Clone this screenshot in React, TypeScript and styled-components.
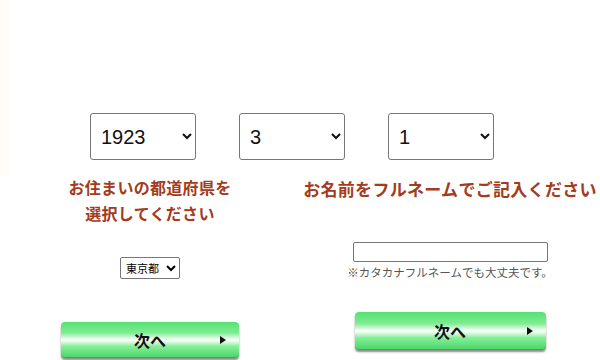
import React from "react";
import styled, { createGlobalStyle } from "styled-components";

const GlobalStyle = createGlobalStyle`
  html, body {
    margin: 0;
    padding: 0;
    background: #ffffff;
  }
  body {
    font-family: "Noto Sans CJK JP", "Liberation Sans", sans-serif;
  }
`;

const Page = styled.div`
  width: 600px;
  height: 360px;
  overflow: hidden;
  background: linear-gradient(to right, #fffdf7 10px, #ffffff 10px) no-repeat;
  background-size: 100% 176px;
`;

const DateRow = styled.div`
  display: flex;
  gap: 43px;
  padding: 113px 0 0 90px;
`;

const DateSelect = styled.select`
  width: 106px;
  height: 47px;
  font-family: "Liberation Sans", Arial, sans-serif;
  font-size: 20px;
  color: #111;
  padding: 0 6px;
  border: 1px solid #767676;
  border-radius: 3px;
  background: #fff;
`;

const Columns = styled.div`
  display: grid;
  grid-template-columns: 300px 300px;
`;

const Column = styled.div<{ $top: number }>`
  display: flex;
  flex-direction: column;
  align-items: center;
  padding-top: ${(p) => p.$top}px;
`;

const Label = styled.div<{ $size: number }>`
  font-family: "Noto Sans CJK JP", sans-serif;
  font-weight: 700;
  font-size: ${(p) => p.$size}px;
  line-height: 26px;
  color: #a33b1c;
  text-align: center;
  white-space: nowrap;
  letter-spacing: 0.3px;
`;

const PrefSelect = styled.select`
  margin-top: 31px;
  width: 60px;
  height: 22px;
  font-family: "Noto Sans CJK JP", sans-serif;
  font-size: 11px;
  padding: 0 1px;
  border: 1px solid #767676;
  border-radius: 2px;
  background: #fff;
`;

const NameInput = styled.input`
  margin-top: 40px;
  width: 195px;
  height: 20px;
  box-sizing: border-box;
  border: 1px solid #767676;
  border-radius: 2px;
`;

const Note = styled.div`
  margin-top: 2px;
  font-size: 11.5px;
  line-height: 16px;
  color: #555;
  white-space: nowrap;
`;

const NextButton = styled.button<{ $w: number; $h: number; $gap: number }>`
  position: relative;
  margin-top: ${(p) => p.$gap}px;
  width: ${(p) => p.$w}px;
  height: ${(p) => p.$h}px;
  border: none;
  border-radius: 4px;
  background: linear-gradient(
    to bottom,
    #55e174 0%,
    #7fec92 30%,
    #ffffff 50%,
    #86ee98 68%,
    #45d566 100%
  );
  box-shadow: 0 2px 2px rgba(0, 0, 0, 0.45), inset 0 -1px 0 rgba(0, 90, 30, 0.3);
  font-family: "Noto Sans CJK JP", sans-serif;
  font-weight: 700;
  font-size: 16px;
  color: #111;
  display: flex;
  align-items: center;
  justify-content: center;
  padding: 0;
`;

const Arrow = styled.span`
  position: absolute;
  right: 13px;
  top: 50%;
  margin-top: -4px;
  width: 0;
  height: 0;
  border-top: 4px solid transparent;
  border-bottom: 4px solid transparent;
  border-left: 6px solid #111;
`;

const years = Array.from({ length: 80 }, (_, i) => 1923 + i);
const months = Array.from({ length: 12 }, (_, i) => i + 1);
const days = Array.from({ length: 31 }, (_, i) => i + 1);

const App: React.FC = () => {
  return (
    <Page>
      <GlobalStyle />
      <DateRow>
        <DateSelect defaultValue={1923}>
          {years.map((y) => (
            <option key={y}>{y}</option>
          ))}
        </DateSelect>
        <DateSelect defaultValue={3}>
          {months.map((m) => (
            <option key={m}>{m}</option>
          ))}
        </DateSelect>
        <DateSelect defaultValue={1}>
          {days.map((d) => (
            <option key={d}>{d}</option>
          ))}
        </DateSelect>
      </DateRow>
      <Columns>
        <Column $top={14}>
          <Label $size={16}>
            お住まいの都道府県を
            <br />
            選択してください
          </Label>
          <PrefSelect defaultValue="東京都">
            <option>北海道</option>
            <option>東京都</option>
            <option>大阪府</option>
          </PrefSelect>
          <NextButton $w={178} $h={36} $gap={43}>
            次へ
            <Arrow />
          </NextButton>
        </Column>
        <Column $top={16}>
          <Label $size={17}>お名前をフルネームでご記入ください</Label>
          <NameInput type="text" />
          <Note>※カタカナフルネームでも大丈夫です。</Note>
          <NextButton $w={191} $h={38} $gap={32}>
            次へ
            <Arrow />
          </NextButton>
        </Column>
      </Columns>
    </Page>
  );
};

export default App;
